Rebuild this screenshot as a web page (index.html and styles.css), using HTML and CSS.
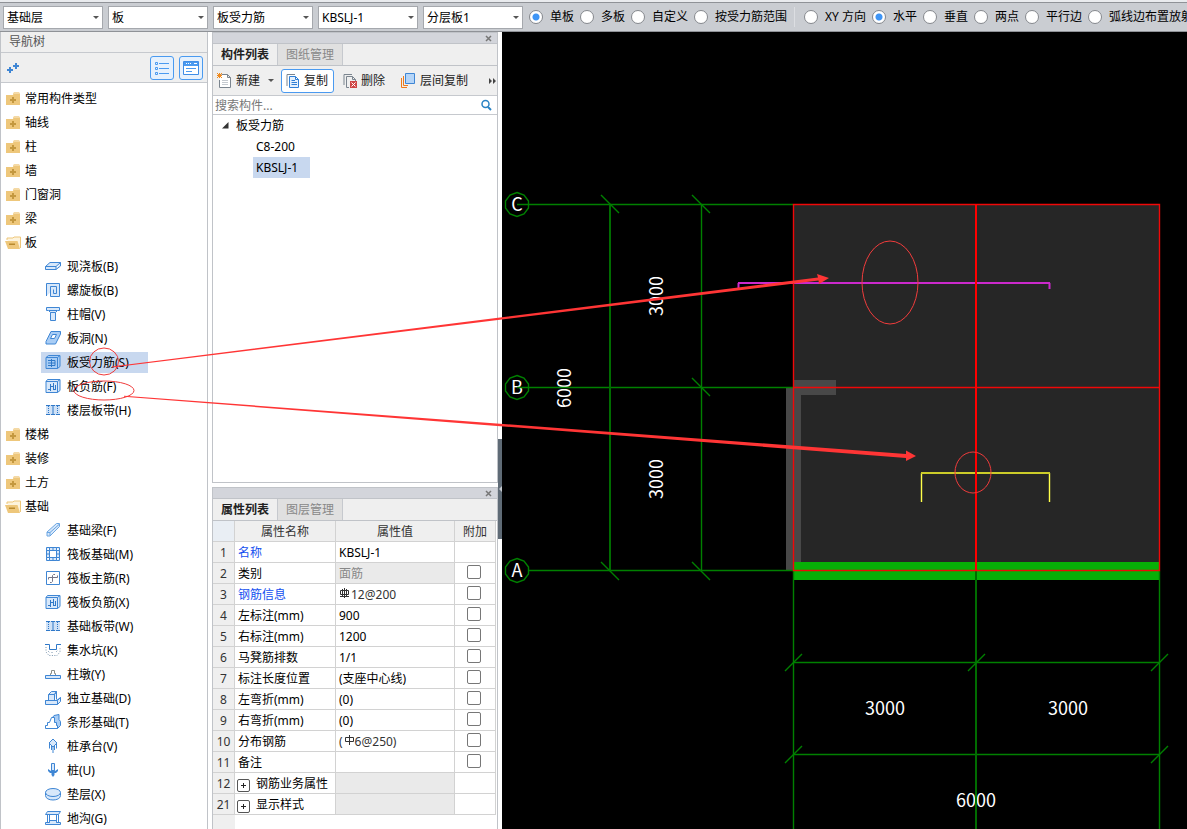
FILE: index.html
```html
<!DOCTYPE html>
<html lang="zh-CN">
<head>
<meta charset="utf-8">
<title>板受力筋</title>
<link rel="stylesheet" href="styles.css">
</head>
<body>
<svg class="symbols" aria-hidden="true">
  <symbol id="folder" viewBox="0 0 16 14"><path d="M8 1.500 9 0h5l1 1.500z" fill="#f4d9a5"/><path d="M8 1h7v2H8z" fill="#f4d9a5"/><path d="M1 3h7l1-1h6v11H1z" fill="#eec77b"/><path d="M7 5h2v2h2v2H9v2H7V9H5V7h2z" fill="#c4983f"/></symbol>
  <symbol id="folder-open" viewBox="0 0 16 14"><path d="M2 4V2h6l1-1h6.500v11" fill="#fdf3dc" stroke="#eec77b"/><path d="M0 5h12.500L15 13H3z" fill="#eec77b"/><path d="M4 7.500h6v1.500H4z" fill="#b98a2e"/></symbol>
  <symbol id="slab" viewBox="0 0 16 16"><path d="M.5 8.500 5 4.500h10.500L11 8.500zM.5 8.500v3H11v-3M11 11.500l4.500-3.500V4.500" class="s"/></symbol>
  <symbol id="spiral" viewBox="0 0 16 16"><path d="M1.500 14V1.500h13V14.500H5.500V4.500h6v7h-3v-4" class="s"/></symbol>
  <symbol id="cap" viewBox="0 0 16 16"><path d="M1.500 1.500h13v3h-2l-2 2v8h-5v-8l-2-2h-2zM4 4.500h8M5.500 6.500h5" class="s"/></symbol>
  <symbol id="hole" viewBox="0 0 16 16"><path d="M6 1.500h9.500L11 11.500H1z" class="s m"/><path d="M1 11.500V14h9.500l5-10V1.500" class="s m"/><path d="M7.500 4.500h4l-2 4h-4z" class="s w"/></symbol>
  <symbol id="rebar" viewBox="0 0 16 16"><path d="M1 3.500h11.500v11H1zM1 3.500 3.500 1.500H15v11l-2.500 2M12.500 3.500 15 1.500" class="s m"/><path d="M3 6.500h7M3 11.500h7M6.500 5v8M10 6.500v5M3 9h7" class="d"/></symbol>
  <symbol id="negbar" viewBox="0 0 16 16"><path d="M1 3.500h11.500v11H1zM1 3.500 2.500 1.500H15v11l-2.500 2M12.500 3.500 15 1.500" class="s"/><path d="M3 11.500h3M5.500 6v7M8.500 5v7M8.500 8.500h-3M10.500 7v4.500M8 11.500h3" class="d"/></symbol>
  <symbol id="strip" viewBox="0 0 16 16"><path d="M1 3h14v10H1z" fill="#cfe1f6"/><path d="M1 3.500h4M6 3.500h4M11 3.500h4M1 12.500h4M6 12.500h4M11 12.500h4M8 4v8" class="d"/><path d="M3.500 4v8M12.500 4v8" class="d" stroke-dasharray="1 1"/></symbol>
  <symbol id="beam" viewBox="0 0 16 16"><path d="M2 10 11.500 1.500h3v3L5 14H2zM2 10.500h3v3M5 10.500l9-8" class="s l"/></symbol>
  <symbol id="raft" viewBox="0 0 16 16"><path d="M1.500 1.500h13v13h-13z" class="s"/><path d="M4.500 4.500h7v7h-7zM1.500 4.500h3v-3M14.500 4.500h-3v-3M1.500 11.500h3v3M14.500 11.500h-3v3M8 1.500v3M8 11.500v3M1.500 8h3M11.500 8h3" class="s w"/></symbol>
  <symbol id="mainbar" viewBox="0 0 16 16"><path d="M1.500 1.500h13v13h-13z" class="s w"/><path d="M3.500 9.500v-2h9v-2M10 4.500H8.500l-1 1v6l-1 1H5" fill="none" stroke="#778"/></symbol>
  <symbol id="pit" viewBox="0 0 16 16"><path d="M0 2.500h4.500v5h7v-5H16" class="d"/><path d="M1 5v5l3 3.500h8l3-3.500V5M3 9l2 2M7 10v2M11 10l2-2" fill="none" stroke="#7994ad" stroke-dasharray="1 1.500"/></symbol>
  <symbol id="pier" viewBox="0 0 16 16"><path d="M.5 9.500h15v3H.5z" class="s"/><path d="M5.500 9V7.500h1v-3h3v3h1V9" fill="none" stroke="#8a8f8a"/></symbol>
  <symbol id="isolated" viewBox="0 0 16 16"><path d="M.5 10.500h3V4.500l3-3h5l-2 3v6h2l4-3v4l-3 3H.5zM3.500 4.500h6M9.500 4.500l2-3v8M.5 10.500h12v4M12.500 10.500l3-3" class="s"/></symbol>
  <symbol id="stripbase" viewBox="0 0 16 16"><path d="M7.500 3.500 9 1.500 14 .5v5l1.500 2v4l-3 3-5-6z" class="s m"/><path d="M.5 14.500v-3h2v-3h2l2-5h3v5h2v3h1v3z" class="s w"/></symbol>
  <symbol id="pilecap" viewBox="0 0 16 16"><path d="m8 1 4 4-4 4-4-4zM4.500 5.500v5M11.500 5.500v5M6.500 8v4M9.500 8v4M8 9v6" class="s"/></symbol>
  <symbol id="pile" viewBox="0 0 16 16"><path d="M3 7l3 2V6h4v3l3-2v2l-2 2H9.500v2L8 15l-1.500-2v-2H5L3 9z" fill="#3f86d4"/><path d="M6.500 1.500h3v7h-3z" class="s"/></symbol>
  <symbol id="cushion" viewBox="0 0 16 16"><path d="M.5 6.500v3c0 6 15 6 15 0v-3" class="s"/><ellipse cx="8" cy="6.500" rx="7.500" ry="4" class="s"/></symbol>
  <symbol id="trench" viewBox="0 0 16 16"><path d="M2.500 1.500h13l-2 3H.5zM2.500 4.500v8M4.500 4.500v8M11.500 4.500v8M13.500 4.500v8M.5 14.500v-2h4v-2h7v2h4v2z" class="s"/></symbol>
</svg>

<header class="topbar">
  <label class="pick"><select aria-label="楼层"><option>基础层</option></select></label>
  <label class="pick"><select aria-label="构件类别"><option>板</option></select></label>
  <label class="pick"><select aria-label="构件类型"><option>板受力筋</option></select></label>
  <label class="pick"><select aria-label="构件"><option>KBSLJ-1</option></select></label>
  <label class="pick"><select aria-label="分层"><option>分层板1</option></select></label>
  <div class="radios">
    <label><input type="radio" name="range" checked>单板</label>
    <label><input type="radio" name="range">多板</label>
    <label><input type="radio" name="range">自定义</label>
    <label><input type="radio" name="range">按受力筋范围</label>
  </div>
  <div class="radios divided">
    <label><input type="radio" name="dir">XY 方向</label>
    <label><input type="radio" name="dir" checked>水平</label>
    <label><input type="radio" name="dir">垂直</label>
    <label><input type="radio" name="dir">两点</label>
    <label><input type="radio" name="dir">平行边</label>
    <label><input type="radio" name="dir">弧线边布置放射</label>
  </div>
</header>

<main class="workspace">
  <nav class="navtree">
    <h2 class="nav-title">导航树</h2>
    <div class="nav-tools">
      <button class="plain" aria-label="展开"><svg width="14" height="12"><path d="M3 5h2v2h2v2H5v2H3V9H1V7h2zM9 1h2v2h2v2h-2v2H9V5H7V3h2z" fill="#3f86d4"/></svg></button>
      <button class="toggle" aria-label="列表"><svg width="16" height="16"><path d="M5 3.500h10M5 8.500h10M5 13.500h10" stroke="#4a9af0"/><path d="M1.500 2.500h2v2h-2zM1.500 7.500h2v2h-2zM1.500 12.500h2v2h-2z" fill="none" stroke="#4a9af0"/></svg></button>
      <button class="toggle" aria-label="面板"><svg width="16" height="16"><path d="M.5 1.500h15v13H.5z" fill="#fff" stroke="#3f8de6"/><path d="M1 2h14v4H1z" fill="#4a9af0"/><path d="M3 3.500h1M5 3.500h1M7 3.500h1M11 3.500h3" stroke="#fff"/><path d="M3 8.500h10M3 11.500h6" stroke="#4a9af0"/></svg></button>
    </div>
    <ul class="tree">
      <li><svg class="fold"><use href="#folder"/></svg>常用构件类型</li>
      <li><svg class="fold"><use href="#folder"/></svg>轴线</li>
      <li><svg class="fold"><use href="#folder"/></svg>柱</li>
      <li><svg class="fold"><use href="#folder"/></svg>墙</li>
      <li><svg class="fold"><use href="#folder"/></svg>门窗洞</li>
      <li><svg class="fold"><use href="#folder"/></svg>梁</li>
      <li><svg class="fold"><use href="#folder-open"/></svg>板</li>
      <li class="leaf"><span><svg><use href="#slab"/></svg>现浇板(B)</span></li>
      <li class="leaf"><span><svg><use href="#spiral"/></svg>螺旋板(B)</span></li>
      <li class="leaf"><span><svg><use href="#cap"/></svg>柱帽(V)</span></li>
      <li class="leaf"><span><svg><use href="#hole"/></svg>板洞(N)</span></li>
      <li class="leaf"><span class="selected"><svg><use href="#rebar"/></svg>板受力筋(S)</span></li>
      <li class="leaf"><span><svg><use href="#negbar"/></svg>板负筋(F)</span></li>
      <li class="leaf"><span><svg><use href="#strip"/></svg>楼层板带(H)</span></li>
      <li><svg class="fold"><use href="#folder"/></svg>楼梯</li>
      <li><svg class="fold"><use href="#folder"/></svg>装修</li>
      <li><svg class="fold"><use href="#folder"/></svg>土方</li>
      <li><svg class="fold"><use href="#folder-open"/></svg>基础</li>
      <li class="leaf"><span><svg><use href="#beam"/></svg>基础梁(F)</span></li>
      <li class="leaf"><span><svg><use href="#raft"/></svg>筏板基础(M)</span></li>
      <li class="leaf"><span><svg><use href="#mainbar"/></svg>筏板主筋(R)</span></li>
      <li class="leaf"><span><svg><use href="#negbar"/></svg>筏板负筋(X)</span></li>
      <li class="leaf"><span><svg><use href="#strip"/></svg>基础板带(W)</span></li>
      <li class="leaf"><span><svg><use href="#pit"/></svg>集水坑(K)</span></li>
      <li class="leaf"><span><svg><use href="#pier"/></svg>柱墩(Y)</span></li>
      <li class="leaf"><span><svg><use href="#isolated"/></svg>独立基础(D)</span></li>
      <li class="leaf"><span><svg><use href="#stripbase"/></svg>条形基础(T)</span></li>
      <li class="leaf"><span><svg><use href="#pilecap"/></svg>桩承台(V)</span></li>
      <li class="leaf"><span><svg><use href="#pile"/></svg>桩(U)</span></li>
      <li class="leaf"><span><svg><use href="#cushion"/></svg>垫层(X)</span></li>
      <li class="leaf"><span><svg><use href="#trench"/></svg>地沟(G)</span></li>
    </ul>
  </nav>

  <div class="middle">
    <section class="panel components">
      <div class="strip"><button class="close" aria-label="关闭"><svg width="8" height="8"><path d="M1 2l5 5M6 2 1 7" stroke="#777" stroke-width="1.500"/></svg></button></div>
      <div class="tabs"><button class="tab active">构件列表</button><button class="tab">图纸管理</button></div>
      <div class="actions">
        <button class="act"><svg width="15" height="16"><path d="M4.500 1.500h6l3 3v10h-11V7M10.500 1.500v3h3" fill="#fff" stroke="#7b858f"/><path d="M5 7.500h6M5 9.500h6M5 11.500h6" stroke="#c5cad0"/><path d="M0 0h1v1h1V0h1v1h1V0h1v1H4v1h1v1H4v1h1v1H4V4H3v1H2V4H1v1H0V4h1V3H0V2h1V1H0z" fill="#f08a1d"/></svg>新建<i class="caret"></i></button>
        <button class="act boxed"><svg width="14" height="16"><path d="M1 13V1.500h8" fill="none" stroke="#7b858f"/><path d="M3.500 3.500h6l3 3v8h-9zM9.500 3.500v3h3" fill="#e6f1fd" stroke="#2f7fd6"/><path d="M5.500 7.500H9M5.500 9.500H11M5.500 11.500H11" stroke="#2f7fd6"/></svg>复制</button>
        <button class="act"><svg width="14" height="16"><path d="M1 12V1.500h8M6 14.500H3.500v-11h6l3 3V8M9.500 3.500v3h3" fill="none" stroke="#7b858f"/><path d="M7 8h7v7H7z" fill="#cf4646"/><path d="M8.500 9.500l4 4M12.500 9.500l-4 4" stroke="#fff"/></svg>删除</button>
        <button class="act apart"><svg width="16" height="16"><path d="M1.500 5v9.500H7M3.500 3v9.500H8" fill="none" stroke="#ee7a1a"/><path d="M5.500.5h9v10h-9z" fill="#b5d5f8" stroke="#3f86d4"/></svg>层间复制</button>
        <button class="more" aria-label="更多"><svg width="8" height="6"><path d="M0 0l3 3-3 3zM4 0l3 3-3 3z" fill="#444"/></svg></button>
      </div>
      <div class="search">
        <input type="text" placeholder="搜索构件..." aria-label="搜索构件">
        <svg width="13" height="13"><circle cx="5.500" cy="5" r="3.500" fill="none" stroke="#2a83c4" stroke-width="1.500"/><path d="m8 8 3 3" stroke="#2a83c4" stroke-width="2"/></svg>
      </div>
      <ul class="parts">
        <li class="root"><svg width="7" height="7"><path d="M6.500 0v6.500H0z" fill="#333"/></svg>板受力筋</li>
        <li><span>C8-200</span></li>
        <li><span class="selected">KBSLJ-1</span></li>
      </ul>
    </section>

    <section class="panel props">
      <div class="strip"><button class="close" aria-label="关闭"><svg width="8" height="8"><path d="M1 2l5 5M6 2 1 7" stroke="#777" stroke-width="1.500"/></svg></button></div>
      <div class="tabs"><button class="tab active">属性列表</button><button class="tab">图层管理</button></div>
      <div class="sheet">
      <table>
        <colgroup><col class="c-num"><col class="c-name"><col class="c-val"><col class="c-add"></colgroup>
        <thead><tr><th class="corner"></th><th>属性名称</th><th>属性值</th><th>附加</th></tr></thead>
        <tbody>
          <tr><th>1</th><td class="key">名称</td><td>KBSLJ-1</td><td></td></tr>
          <tr><th>2</th><td>类别</td><td class="off">面筋</td><td class="tick"><input type="checkbox" aria-label="类别 附加"></td></tr>
          <tr><th>3</th><td class="key">钢筋信息</td><td class="soft"><svg class="bar" width="12" height="12"><path d="M5.500 0v10M1.500 2.500h8v4h-8zM3.500 1v7M7.500 1v7M1 8.500h9" fill="none" stroke="#333"/></svg>12@200</td><td class="tick"><input type="checkbox" aria-label="钢筋信息 附加"></td></tr>
          <tr><th>4</th><td>左标注(mm)</td><td>900</td><td class="tick"><input type="checkbox" aria-label="左标注 附加"></td></tr>
          <tr><th>5</th><td>右标注(mm)</td><td>1200</td><td class="tick"><input type="checkbox" aria-label="右标注 附加"></td></tr>
          <tr><th>6</th><td>马凳筋排数</td><td>1/1</td><td class="tick"><input type="checkbox" aria-label="马凳筋排数 附加"></td></tr>
          <tr><th>7</th><td>标注长度位置</td><td>(支座中心线)</td><td class="tick"><input type="checkbox" aria-label="标注长度位置 附加"></td></tr>
          <tr><th>8</th><td>左弯折(mm)</td><td>(0)</td><td class="tick"><input type="checkbox" aria-label="左弯折 附加"></td></tr>
          <tr><th>9</th><td>右弯折(mm)</td><td>(0)</td><td class="tick"><input type="checkbox" aria-label="右弯折 附加"></td></tr>
          <tr><th>10</th><td>分布钢筋</td><td class="soft">(<svg class="bar" width="12" height="12"><path d="M6.500 0v10M2.500 2.500h8v4h-8z" fill="none" stroke="#333"/></svg>6@250)</td><td class="tick"><input type="checkbox" aria-label="分布钢筋 附加"></td></tr>
          <tr><th>11</th><td>备注</td><td></td><td class="tick"><input type="checkbox" aria-label="备注 附加"></td></tr>
          <tr><th>12</th><td class="group"><button aria-label="展开"><svg width="7" height="7"><path d="M1 3.500h5M3.500 1v5" stroke="#222"/></svg></button>钢筋业务属性</td><td class="off"></td><td></td></tr>
          <tr><th>21</th><td class="group"><button aria-label="展开"><svg width="7" height="7"><path d="M1 3.500h5M3.500 1v5" stroke="#222"/></svg></button>显示样式</td><td class="off"></td><td></td></tr>
        </tbody>
      </table>
      <div class="rest"></div>
      </div>
    </section>
  </div>

  <div class="splitter"><div class="grip"><svg width="3" height="6"><path d="M3 0v6L0 3z" fill="#c5cad0"/></svg></div></div>

  <div class="canvas">
    <svg class="drawing">
      <g transform="translate(-502 -32)">
        <g class="dims">
          <text x="885" y="715">3000</text><text x="1068" y="715">3000</text><text x="976" y="807">6000</text>
          <text transform="translate(663 296) rotate(-90)">3000</text><text transform="translate(663 479) rotate(-90)">3000</text><text transform="translate(571 388) rotate(-90)">6000</text>
          <text x="517" y="211">C</text><text x="517" y="394">B</text><text x="517" y="577">A</text>
        </g>
        <path d="M793 204h367v367H793z" fill="#262626"/>
        <path d="M786 388h7v-8h43v15h-35v176h-15z" fill="#484848"/>
        <path d="M793 562h367v18H793z" fill="#07b007"/>
        <g class="axis">
          <path d="M517 204.500h276M517 387.500h276M529 570.500h264M701.500 204v367M793.500 571v258M1159.500 571v258M793 662.500h366M793 754.500h366"/>
          <path d="M610 204v367M976 571v258" stroke-width="2" stroke="#006c00"/>
          <path d="M601 195l18 18M692 195l18 18M692 378l18 18M601 562l18 18M692 562l18 18M785 671l17-17M968 671l17-17M1151 671l17-17M785 763l17-17M1151 763l17-17"/>
          <path id="bubble" d="M517 192.500l7 2.500 4.500 6v7l-4.500 6-7 2.500-7-2.500-4.500-6v-7l4.500-6z"/>
          <use href="#bubble" y="183"/><use href="#bubble" y="366"/>
        </g>
        <path d="M738.500 289v-6M1049.500 289v-6M738 283h312" fill="none" stroke="#cc29cc" stroke-width="2"/>
        <path d="M921.500 502v-29M1049.500 502v-29" stroke="#ffff4a" stroke-width="1.400"/><path d="M921 473h129" stroke="#cccc29" stroke-width="2"/>
        <path d="M793.500 204.500h366v366h-366zM793 387.500h366" fill="none" stroke="#f00808" stroke-width="1.400"/>
        <path d="M976 204v367" stroke="#f00" stroke-width="2"/>
      </g>
    </svg>
  </div>
</main>

<svg class="notes" aria-hidden="true">
  <g fill="none" stroke="#f03c3c"><ellipse cx="104" cy="361.500" rx="14.500" ry="13.500"/><ellipse cx="104" cy="390.500" rx="30" ry="9.500"/><ellipse cx="890" cy="282.500" rx="28" ry="41.500"/><ellipse cx="973" cy="472.500" rx="18" ry="20.500"/></g>
  <g fill="#ff3535"><path d="M112 366.500 818 277.500l-1-3.500 12 4-10 6-.500-3.500L112 367.500z"/><path d="M124 395.700 906 454v-3.500l10 5.500-10 5V458L124 396.700z"/></g>
</svg>
</body>
</html>
```
FILE: styles.css
```css
* { box-sizing: border-box; }

body {
  margin: 0;
  height: 100vh;
  display: flex;
  flex-direction: column;
  overflow: hidden;
  position: relative;
  background: #fff;
  color: #000;
  font: 12px/20px "Noto Sans", "Noto Sans CJK SC", sans-serif;
}

button, input, select { font: inherit; color: inherit; margin: 0; }
button { padding: 0; border: 0; background: none; display: flex; align-items: center; }
ul { list-style: none; margin: 0; padding: 0; }
svg { display: block; flex: none; }
.symbols { position: absolute; width: 0; height: 0; }

.s { fill: #d8e8fa; stroke: #3f86d4; }
.m { fill: #a9cdf5; }
.w { fill: #fff; }
.l { stroke: #6aa5e2; }
.d { fill: none; stroke: #2f78c8; }

/* top bar */
.topbar {
  flex: none;
  height: 32px;
  display: flex;
  align-items: center;
  gap: 5px;
  padding: 3px 0 0 3px;
  background: linear-gradient(#e9ebee 2px, #8f9297 2px, #8f9297 3px, #cacdd2 3px);
  border-bottom: 1px solid #8f9297;
  white-space: nowrap;
}
.pick { position: relative; flex: none; width: 100px; height: 23px; }
.pick select {
  appearance: none;
  display: block;
  width: 100%;
  height: 100%;
  padding: 1px 16px 0 3px;
  border: 1px solid #a5a8ad;
  border-radius: 0;
  background: #fff;
}
.pick::after, .caret {
  content: "";
  border: 3px solid transparent;
  border-top-color: #555;
  border-bottom: 0;
}
.pick::after { position: absolute; right: 4px; top: 10px; }
.radios { display: flex; gap: 6px; margin-left: 1px; }
.radios label { display: flex; align-items: center; gap: 7px; }
.divided { margin-left: 2px; border-left: 1px solid #dcdee2; padding-left: 9px; }
input[type="radio"] {
  appearance: none;
  width: 14px;
  height: 14px;
  border: 1px solid #85888d;
  border-radius: 50%;
  background: #fff;
}
input[type="radio"]:checked { background: radial-gradient(circle, #3f95f5 3px, #fff 4px); }

/* workspace */
.workspace { flex: 1; min-height: 0; display: flex; }

.navtree {
  flex: none;
  width: 208px;
  margin-right: 4px;
  border: 1px solid #c0c3c8;
  border-width: 0 1px;
  overflow: hidden;
}
.nav-title {
  margin: 0;
  height: 21px;
  padding-left: 8px;
  font-size: 12px;
  font-weight: 400;
  color: #555;
  background: #efefef;
  border-bottom: 1px solid #c6c9ce;
}
.nav-tools {
  display: flex;
  align-items: center;
  gap: 5px;
  height: 30px;
  padding: 0 4px 0 5px;
  background: #efefef;
  border-bottom: 1px solid #c6c9ce;
}
.nav-tools .plain { margin-right: auto; }
.toggle {
  width: 24px;
  height: 24px;
  justify-content: center;
  border: 1px solid #4a9af0;
  border-radius: 3px;
  background: #e6f1fd;
}
.tree { padding-top: 3px; }
.tree li { display: flex; align-items: center; height: 24px; padding: 2px 0 0 4px; gap: 4px; white-space: nowrap; }
.fold { width: 16px; height: 14px; }
.tree .leaf { padding: 0 0 0 40px; }
.leaf span { display: flex; align-items: center; gap: 6px; height: 21px; padding: 2px 19px 0 4px; }
.leaf svg { width: 16px; height: 16px; margin-bottom: 2px; }
.selected { background: #c8d8ef; }

.middle { flex: none; width: 286px; display: flex; flex-direction: column; gap: 4px; }
.panel {
  flex: 451 1 0;
  min-height: 0;
  display: flex;
  flex-direction: column;
  overflow: hidden;
  border: 1px solid #c0c3c8;
}
.props { flex-grow: 342; border-bottom: 0; }
.strip {
  flex: none;
  height: 11px;
  display: flex;
  align-items: center;
  justify-content: flex-end;
  padding-right: 4px;
  background: #d3d5db;
  border-bottom: 1px solid #c0c3c8;
}
.tabs { flex: none; display: flex; height: 22px; background: #efefef; border-bottom: 1px solid #c0c3c8; }
.tab { width: 65px; justify-content: center; color: #888; background: #e0e0e0; border-right: 1px solid #c6c9ce; }
.tab.active { color: #222; font-weight: 700; background: #efefef; }

.actions {
  flex: none;
  display: flex;
  align-items: center;
  height: 30px;
  padding-left: 4px;
  background: #efefef;
  border-bottom: 1px solid #c6c9ce;
  color: #222;
  white-space: nowrap;
}
.act { gap: 4px; height: 24px; margin-right: 9px; }
.act .caret { margin-left: 4px; margin-right: -2px; }
.boxed { padding: 0 5px 0 4px; border: 1px solid #4a9af0; border-radius: 3px; background: #fff; }
.apart { margin-left: 6px; margin-right: 0; }
.more { margin-left: auto; }

.search { flex: none; display: flex; align-items: center; height: 19px; padding-right: 4px; border-bottom: 1px solid #c6c9ce; }
.search input { flex: 1; min-width: 0; height: 18px; padding: 1px 2px 0; border: 0; outline: 0; background: none; }
.search input::placeholder { color: #777; }
.parts li { display: flex; align-items: center; height: 21px; padding-left: 40px; }
.parts .root { gap: 7px; padding-left: 9px; }
.parts span { height: 21px; padding: 1px 12px 0 3px; }

/* property sheet */
.sheet { flex: 1; min-height: 0; display: flex; flex-direction: column; padding-right: 1px; overflow: hidden; }
table { width: 100%; table-layout: fixed; border-collapse: separate; border-spacing: 0; line-height: 18px; }
.c-num { width: 22px; }
.c-name { width: 101px; }
.c-add { width: 41px; }
th, td { height: 21px; padding: 2px 0 0; border: 1px solid #d2d2d2; border-width: 0 1px 1px 0; white-space: nowrap; overflow: hidden; }
th { background: #efefef; font-weight: 400; color: #333; text-align: center; }
.corner { background: #e9eef4; }
td { padding-left: 3px; }
.key { color: #1450f0; }
.off { background: #eaeaea; color: #888; }
.soft { color: #333; }
.bar { display: inline-block; vertical-align: -1px; }
td.tick { padding: 0 2px 2px 0; line-height: 0; text-align: center; }
input[type="checkbox"] {
  appearance: none;
  width: 14px;
  height: 14px;
  border: 1px solid #777;
  border-radius: 2px;
  background: #fff;
}
td.group { padding-left: 2px; }
.group button {
  display: inline-flex;
  justify-content: center;
  width: 13px;
  height: 13px;
  margin-right: 6px;
  border: 1px solid #555;
  border-radius: 2px;
  vertical-align: -1px;
}
.group svg { margin: auto; }
.rest { flex: 1; width: 22px; background: #efefef; }

.splitter { flex: none; width: 4px; display: flex; flex-direction: column; overflow: hidden; }
.splitter::before { content: ""; flex: 407; }
.splitter::after { content: ""; flex: 290; }
.grip { height: 100px; background: #5f6b76; display: flex; align-items: center; justify-content: flex-end; }

.canvas { flex: 1; min-width: 0; background: #000; overflow: hidden; }
.drawing { width: 100%; height: 100%; }
.dims text { fill: #fff; font: 18px "Noto Sans CJK SC", sans-serif; text-anchor: middle; }
.axis { fill: none; stroke: #008000; stroke-width: 1.4; }
.notes { position: absolute; inset: 0; width: 100%; height: 100%; pointer-events: none; }
```
